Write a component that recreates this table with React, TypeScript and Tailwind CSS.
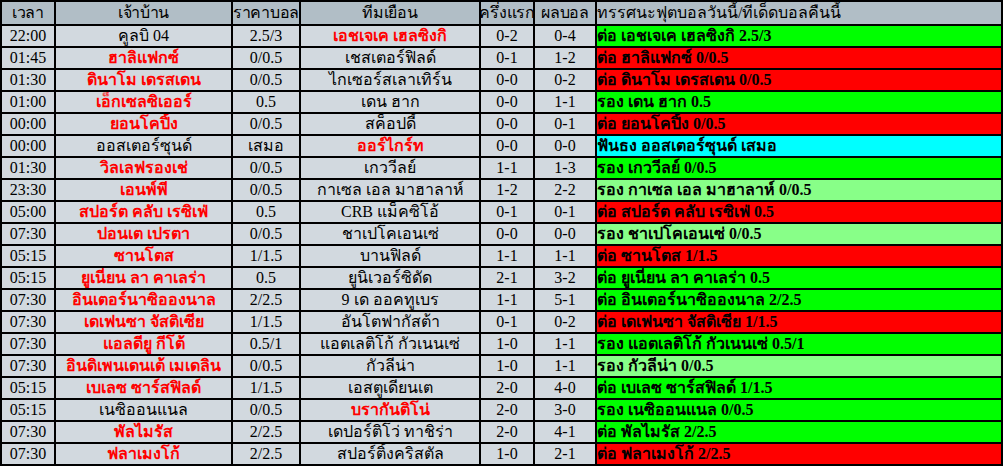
import React from "react"

type Row = {
    time: string
    home: string
    homeRed?: boolean
    price: string
    away: string
    awayRed?: boolean
    half: string
    full: string
    tip: string
    tipBg: string
}

const rows: Row[] = [
    { time: "22:00", home: "คูลบิ 04", price: "2.5/3", away: "เอชเจเค เฮลซิงกิ", awayRed: true, half: "0-2", full: "0-4", tip: "ต่อ เอชเจเค เฮลซิงกิ 2.5/3", tipBg: "bg-[#00ff00]" },
    { time: "01:45", home: "ฮาลิแฟกซ์", homeRed: true, price: "0/0.5", away: "เชสเตอร์ฟิลด์", half: "0-1", full: "1-2", tip: "ต่อ ฮาลิแฟกซ์ 0/0.5", tipBg: "bg-[#ff0000]" },
    { time: "01:30", home: "ดินาโม เดรสเดน", homeRed: true, price: "0/0.5", away: "ไกเซอร์สเลาเทิร์น", half: "0-0", full: "0-2", tip: "ต่อ ดินาโม เดรสเดน 0/0.5", tipBg: "bg-[#ff0000]" },
    { time: "01:00", home: "เอ็กเซลซิเออร์", homeRed: true, price: "0.5", away: "เดน ฮาก", half: "0-0", full: "1-1", tip: "รอง เดน ฮาก 0.5", tipBg: "bg-[#00ff00]" },
    { time: "00:00", home: "ยอนโคปิ้ง", homeRed: true, price: "0/0.5", away: "สค็อปดี้", half: "0-0", full: "0-1", tip: "ต่อ ยอนโคปิ้ง 0/0.5", tipBg: "bg-[#ff0000]" },
    { time: "00:00", home: "ออสเตอร์ซุนด์", price: "เสมอ", away: "ออร์ไกร์ท", awayRed: true, half: "0-0", full: "0-0", tip: "ฟันธง ออสเตอร์ซุนด์ เสมอ", tipBg: "bg-[#00ffff]" },
    { time: "01:30", home: "วิลเลฟรองเช่", homeRed: true, price: "0/0.5", away: "เกววีลย์", half: "1-1", full: "1-3", tip: "รอง เกววีลย์ 0/0.5", tipBg: "bg-[#00ff00]" },
    { time: "23:30", home: "เอนพ์พี", homeRed: true, price: "0/0.5", away: "กาเซล เอล มาฮาลาห์", half: "1-2", full: "2-2", tip: "รอง กาเซล เอล มาฮาลาห์ 0/0.5", tipBg: "bg-[#88ff88]" },
    { time: "05:00", home: "สปอร์ต คลับ เรซิเฟ่", homeRed: true, price: "0.5", away: "CRB แม็คซิโอ้", half: "0-1", full: "0-1", tip: "ต่อ สปอร์ต คลับ เรซิเฟ่ 0.5", tipBg: "bg-[#ff0000]" },
    { time: "07:30", home: "ปอนเต เปรตา", homeRed: true, price: "0/0.5", away: "ชาเปโคเอนเซ่", half: "0-0", full: "0-0", tip: "รอง ชาเปโคเอนเซ่ 0/0.5", tipBg: "bg-[#88ff88]" },
    { time: "05:15", home: "ซานโตส", homeRed: true, price: "1/1.5", away: "บานฟิลด์", half: "1-1", full: "1-1", tip: "ต่อ ซานโตส 1/1.5", tipBg: "bg-[#ff0000]" },
    { time: "05:15", home: "ยูเนี่ยน ลา คาเลร่า", homeRed: true, price: "0.5", away: "ยูนิเวอร์ซิดัด", half: "2-1", full: "3-2", tip: "ต่อ ยูเนี่ยน ลา คาเลร่า 0.5", tipBg: "bg-[#00ff00]" },
    { time: "07:30", home: "อินเตอร์นาซิอองนาล", homeRed: true, price: "2/2.5", away: "9 เด ออคทูเบร", half: "1-1", full: "5-1", tip: "ต่อ อินเตอร์นาซิอองนาล 2/2.5", tipBg: "bg-[#00ff00]" },
    { time: "07:30", home: "เดเฟนซา จัสติเซีย", homeRed: true, price: "1/1.5", away: "อันโตฟากัสต้า", half: "0-1", full: "0-2", tip: "ต่อ เดเฟนซา จัสติเซีย 1/1.5", tipBg: "bg-[#ff0000]" },
    { time: "07:30", home: "แอลดียู กีโต้", homeRed: true, price: "0.5/1", away: "แอตเลติโก้ กัวเนนเซ่", half: "1-0", full: "1-1", tip: "รอง แอตเลติโก้ กัวเนนเซ่ 0.5/1", tipBg: "bg-[#00ff00]" },
    { time: "07:30", home: "อินดิเพนเดนเต้ เมเดลิน", homeRed: true, price: "0/0.5", away: "กัวลีน่า", half: "1-0", full: "1-1", tip: "รอง กัวลีน่า 0/0.5", tipBg: "bg-[#88ff88]" },
    { time: "05:15", home: "เบเลซ ซาร์สฟิลด์", homeRed: true, price: "1/1.5", away: "เอสตูเดียนเต", half: "2-0", full: "4-0", tip: "ต่อ เบเลซ ซาร์สฟิลด์ 1/1.5", tipBg: "bg-[#00ff00]" },
    { time: "05:15", home: "เนซิออนแนล", price: "0/0.5", away: "บรากันติโน่", awayRed: true, half: "2-0", full: "3-0", tip: "รอง เนซิออนแนล 0/0.5", tipBg: "bg-[#00ff00]" },
    { time: "07:30", home: "พัลไมรัส", homeRed: true, price: "2/2.5", away: "เดปอร์ติโว่ ทาชิร่า", half: "2-0", full: "4-1", tip: "ต่อ พัลไมรัส 2/2.5", tipBg: "bg-[#00ff00]" },
    { time: "07:30", home: "ฟลาเมงโก้", homeRed: true, price: "2/2.5", away: "สปอร์ติ้งคริสตัล", half: "1-0", full: "2-1", tip: "ต่อ ฟลาเมงโก้ 2/2.5", tipBg: "bg-[#ff0000]" },
]

const cell = "bg-[#d2d9df] flex items-center justify-center whitespace-nowrap overflow-hidden"
const head = "bg-[#b1bec6] flex items-center justify-center whitespace-nowrap tracking-[-0.3px]"

export default function App() {
    return (
        <div className="bg-white w-[1005px] h-[468px] font-['Liberation_Serif',serif] text-[16px] leading-none text-black">
            <div className="grid grid-cols-[52px_175px_66px_178px_52px_60px_404px] grid-rows-[22px] auto-rows-[20px] gap-[2px] p-[2px] bg-black w-fit">
                {/* header */}
                <div className={head}>เวลา</div>
                <div className={head}>เจ้าบ้าน</div>
                <div className={head}>ราคาบอล</div>
                <div className={head}>ทีมเยือน</div>
                <div className={head}>ครึ่งแรก</div>
                <div className={head}>ผลบอล</div>
                <div className="bg-[#b1bec6] flex items-center whitespace-nowrap overflow-hidden">ทรรศนะฟุตบอลวันนี้/ทีเด็ดบอลคืนนี้</div>

                {rows.map((r, i) => (
                    <React.Fragment key={i}>
                        <div className={cell}>{r.time}</div>
                        <div className={`${cell} ${r.homeRed ? "text-[#ff0000] font-bold" : ""}`}>{r.home}</div>
                        <div className={cell}>{r.price}</div>
                        <div className={`${cell} ${r.awayRed ? "text-[#ff0000] font-bold" : ""}`}>{r.away}</div>
                        <div className={cell}>{r.half}</div>
                        <div className={cell}>{r.full}</div>
                        <div className={`${r.tipBg} flex items-center whitespace-nowrap overflow-hidden font-bold`}>{r.tip}</div>
                    </React.Fragment>
                ))}
            </div>
        </div>
    )
}
